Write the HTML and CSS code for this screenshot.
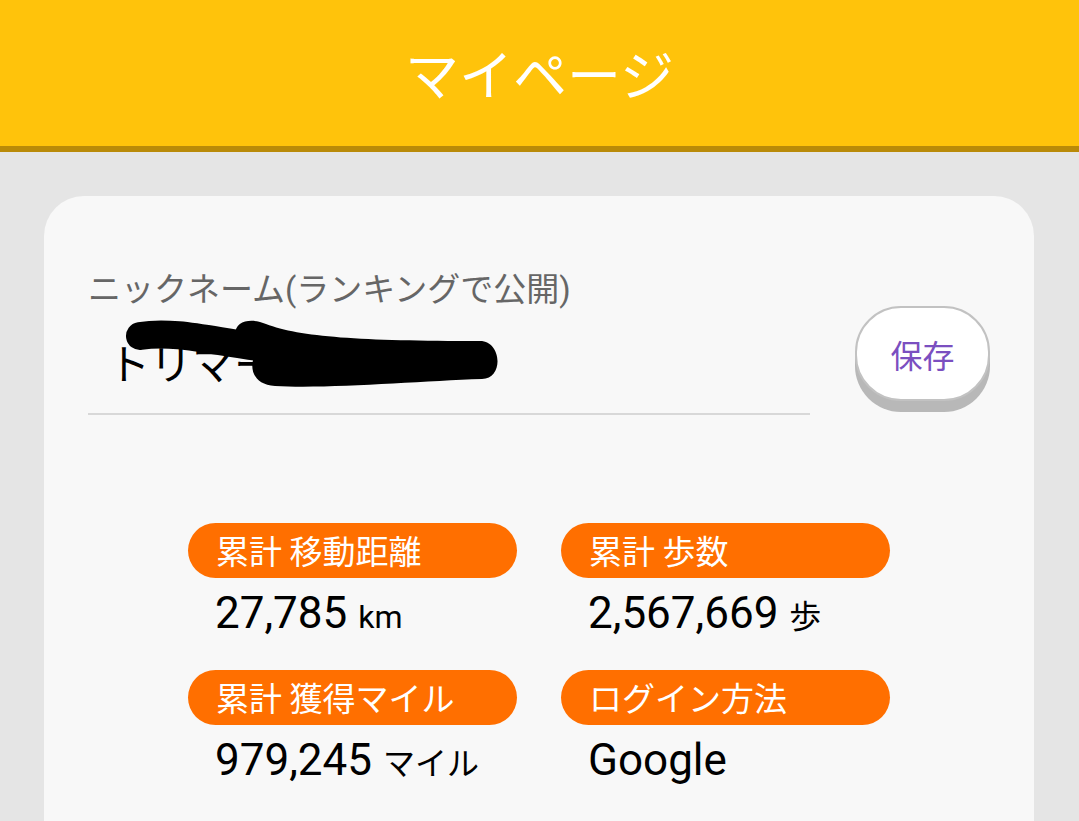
FILE: index.html
```html
<!DOCTYPE html>
<html lang="ja">
<head>
  <meta charset="UTF-8">
  <title>マイページ</title>
  <link rel="stylesheet" href="styles.css">
</head>
<body>
<header class="topbar">
  <h1 class="topbar-title">マイページ</h1>
</header>

<main class="page">
  <section class="card">
    <div class="nick-row">
      <div class="nick-field">
        <label class="nick-label">ニックネーム(ランキングで公開)</label>
        <div class="nick-input">
          <span class="nick-value">トリマー</span>
          <svg class="redact" width="722" height="103" viewBox="0 0 722 103">
            <path d="M52,27 C90,21 130,34 180,39" fill="none" stroke="#000" stroke-width="28" stroke-linecap="round"/>
            <path d="M147,26 C147,11 164,9 178,15 C212,28 272,32 392,32 C414,32 416,70 394,70 C332,72 242,80 187,77 C168,76 162,63 165,51 C155,46 147,39 147,26 Z" fill="#000"/>
          </svg>
        </div>
      </div>
      <button class="save-btn">保存</button>
    </div>

    <div class="stats">
      <div class="stat">
        <div class="stat-label">累計 移動距離</div>
        <div class="stat-value">27,785 <span class="unit">km</span></div>
      </div>
      <div class="stat">
        <div class="stat-label">累計 歩数</div>
        <div class="stat-value">2,567,669 <span class="unit">歩</span></div>
      </div>
      <div class="stat">
        <div class="stat-label">累計 獲得マイル</div>
        <div class="stat-value">979,245 <span class="unit">マイル</span></div>
      </div>
      <div class="stat">
        <div class="stat-label">ログイン方法</div>
        <div class="stat-value">Google</div>
      </div>
    </div>
  </section>
</main>
</body>
</html>
```

FILE: styles.css
```css
body { margin: 0; background: #e5e5e5; font-family: Roboto, "Noto Sans CJK JP", sans-serif; color: #000; overflow: hidden; }

.topbar { height: 146px; background: #ffc30b; border-bottom: 6px solid #b98a08; display: flex; align-items: center; justify-content: center; }
.topbar-title { margin: 0; color: #fff; font-family: "Noto Sans CJK JP", sans-serif; font-weight: 400; font-size: 54px; line-height: 1; }

.page { padding: 44px 45px 0 44px; }
.card { background: #f8f8f8; border-radius: 40px; min-height: 700px; padding: 75px 44px 0 44px; }

.nick-row { display: flex; align-items: flex-end; gap: 45px; }
.nick-field { width: 722px; }
.nick-label { display: block; font-size: 33px; line-height: 38px; color: #666; }
.nick-input { position: relative; height: 104px; border-bottom: 2px solid #d8d8d8; display: flex; align-items: center; padding-left: 20px; }
.nick-value { font-family: "Noto Sans CJK JP", sans-serif; font-size: 42px; }
.redact { position: absolute; left: 0; top: 0; }

.save-btn { width: 135px; height: 95px; margin-bottom: 14px; background: #fff; border: 2px solid #c2c2c2; border-radius: 46px; box-shadow: 0 11px 0 #b8b8b8; color: #7b4fc0; font-family: "Noto Sans CJK JP", sans-serif; font-size: 32px; padding: 0; }

.stats { display: grid; grid-template-columns: 329px 329px; column-gap: 44px; row-gap: 26px; justify-content: center; margin-top: 108px; }
.stat-label { height: 55px; border-radius: 28px; background: #ff6f00; color: #fff; font-family: "Noto Sans CJK JP", sans-serif; font-size: 33px; line-height: 55px; padding-left: 28px; }
.stat-value { font-size: 44px; line-height: 53px; margin-top: 9px; padding-left: 27px; }
.unit { font-size: 32px; font-family: Roboto, "Noto Sans CJK JP", sans-serif; }
```
